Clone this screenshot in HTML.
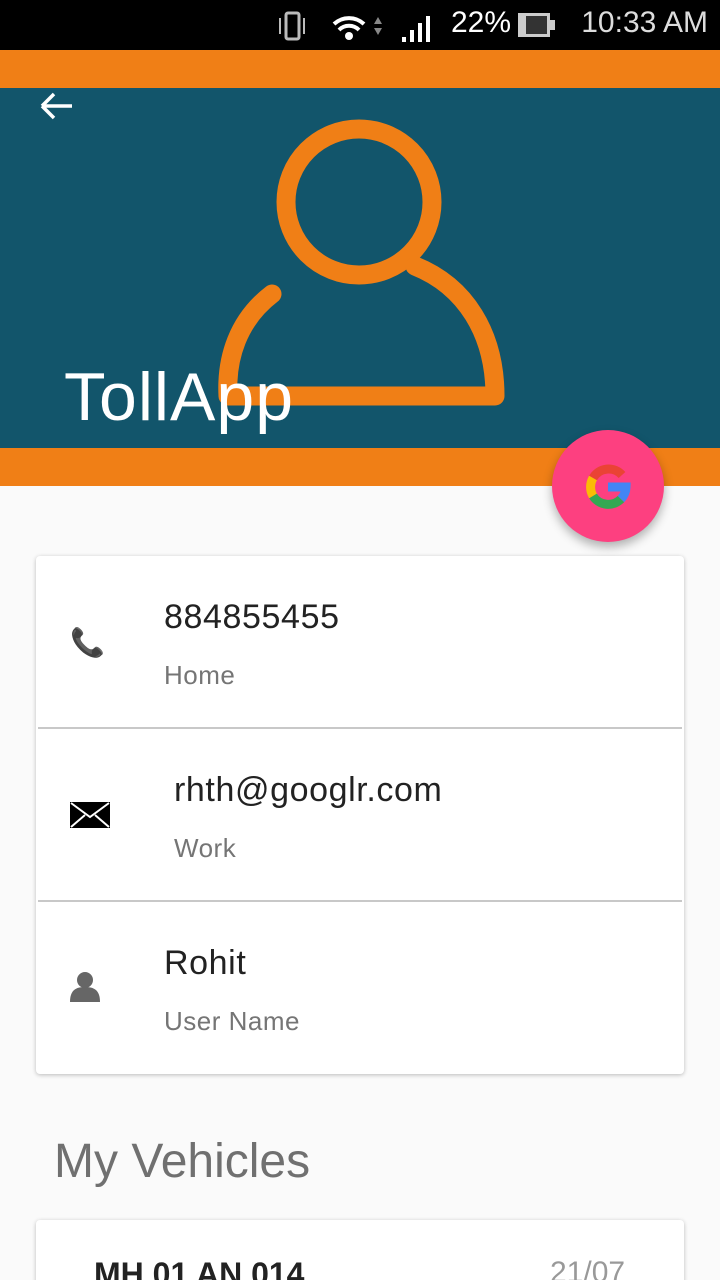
<!DOCTYPE html>
<html><head><meta charset="utf-8"><style>
*{margin:0;padding:0;box-sizing:border-box}
html,body{width:720px;height:1280px;overflow:hidden}
body{background:#fafafa;font-family:"Liberation Sans",sans-serif;position:relative}
.abs{position:absolute}
.card{position:absolute;left:36px;width:648px;background:#fff;border-radius:4px;box-shadow:0 1px 4px rgba(0,0,0,.25)}
.t1{position:absolute;font-size:34px;color:#222;letter-spacing:0.6px}
.t2{position:absolute;font-size:26px;color:#757575;letter-spacing:0.5px}
.sep{position:absolute;left:2px;right:2px;height:2px;background:#c8c8c8}
</style></head><body>
<div class="abs" style="left:0;top:0;width:720px;height:50px;background:#000"></div>
<div class="abs" style="right:12px;top:6px;color:#ddd;font-size:30px">10:33 AM</div>
<div class="abs" style="left:451px;top:6px;color:#fff;font-size:30px">22%</div>
<div class="abs" style="left:518px;top:13px;width:32px;height:24px;background:#333;border:3px solid #ccc;border-left-width:8px"></div>
<div class="abs" style="left:550px;top:20px;width:5px;height:10px;background:#ccc"></div>
<svg class="abs" style="left:276px;top:8px" width="160" height="36"><rect x="10" y="5" width="13" height="26" rx="2" fill="none" stroke="#bbb" stroke-width="3"/><path d="M4 10v16M28 10v16" stroke="#bbb" stroke-width="2"/><path d="M58 16a22 22 0 0 1 30 0M63 22a14 14 0 0 1 20 0" stroke="#fff" stroke-width="4" fill="none"/><circle cx="73" cy="28" r="4" fill="#fff"/><path d="M98 16l4-7 4 7zM98 20l4 7 4-7z" fill="#888"/><rect x="126" y="29" width="4" height="5" fill="#fff"/><rect x="134" y="22" width="4" height="12" fill="#fff"/><rect x="142" y="15" width="4" height="19" fill="#fff"/><rect x="150" y="8" width="4" height="26" fill="#fff"/></svg>
<div class="abs" style="left:0;top:50px;width:720px;height:38px;background:#f07f16"></div>
<div class="abs" style="left:0;top:88px;width:720px;height:360px;background:#12556b"></div>
<div class="abs" style="left:0;top:448px;width:720px;height:38px;background:#f07f16"></div>
<svg class="abs" style="left:0;top:88px" width="720" height="360"><path d="M42 18h30M42 18l12-12M42 18l12 12" stroke="#fff" stroke-width="3.5" fill="none"/>
<g fill="none" stroke="#f07f16" stroke-width="19" stroke-linecap="round" stroke-linejoin="round"><circle cx="359" cy="114" r="73"/><path d="M272 206C238 232 226 270 228 308L495 308C495 245 465 198 415 178"/></g></svg>
<div class="abs" style="left:64px;top:358px;color:#fff;font-size:68px;letter-spacing:1px">TollApp</div>
<div class="abs" style="left:552px;top:430px;width:112px;height:112px;border-radius:50%;background:#fd4080;box-shadow:0 5px 10px rgba(0,0,0,.3)"></div>
<svg class="abs" style="left:584px;top:463px" width="48" height="48" viewBox="0 0 48 48"><g fill="none" stroke-width="9"><path d="M38 12A18 18 0 0 0 9 15" stroke="#ea4335"/><path d="M9 15A18 18 0 0 0 9 33" stroke="#fbbc05"/><path d="M9 33A18 18 0 0 0 37 36" stroke="#34a853"/><path d="M37 36A18 18 0 0 0 42 24H24" stroke="#4285f4"/></g></svg>
<div class="card" style="top:556px;height:518px">
<div class="t1" style="left:128px;top:42px">884855455</div><div class="t2" style="left:128px;top:104px">Home</div>
<div class="abs" style="left:34px;top:70px;font-size:28px">📞</div>
<div class="sep" style="top:171px"></div>
<div class="t1" style="left:138px;top:215px">rhth@googlr.com</div><div class="t2" style="left:138px;top:277px">Work</div>
<svg class="abs" style="left:34px;top:246px" width="40" height="26"><rect width="40" height="26" fill="#000"/><path d="M1 1l19 14L39 1M1 25l14-12M39 25L25 13" stroke="#fff" stroke-width="2" fill="none"/></svg>
<div class="sep" style="top:344px"></div>
<div class="t1" style="left:128px;top:388px">Rohit</div><div class="t2" style="left:128px;top:450px">User Name</div>
<svg class="abs" style="left:32px;top:414px" width="34" height="32"><circle cx="17" cy="10" r="8" fill="#666"/><path d="M2 32c0-12 6-15 15-15s15 3 15 15z" fill="#666"/></svg>
</div>
<div class="abs" style="left:54px;top:1134px;font-size:48px;color:#707070">My Vehicles</div>
<div class="card" style="top:1220px;height:80px">
<div class="abs" style="left:58px;top:36px;font-size:32px;font-weight:bold;color:#222">MH 01 AN 014</div>
<div class="abs" style="left:514px;top:36px;font-size:30px;color:#999">21/07</div>
</div>
</body></html>
